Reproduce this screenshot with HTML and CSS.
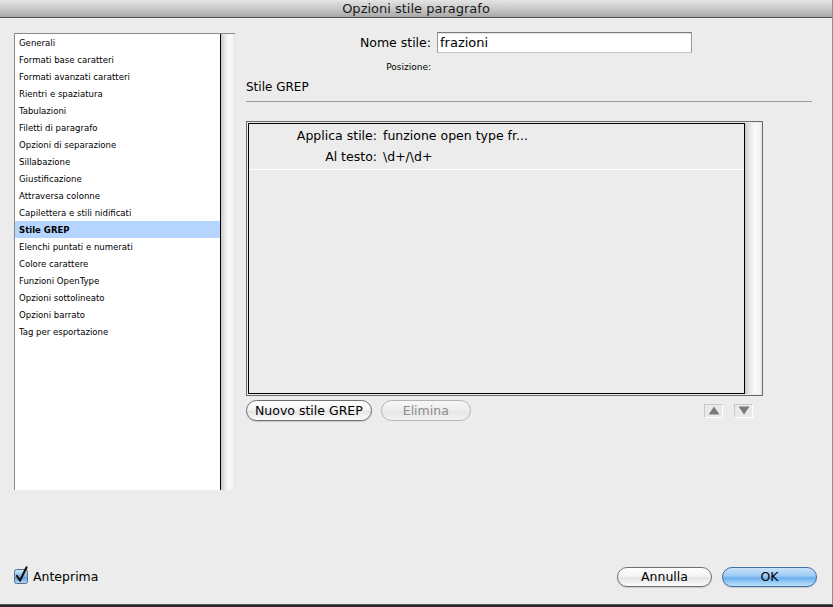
FILE: index.html
```html
<!DOCTYPE html>
<html lang="it">
<head>
<meta charset="utf-8">
<title>Opzioni stile paragrafo</title>
<link rel="stylesheet" href="styles.css">
</head>
<body>
<div class="window">
  <div class="titlebar">Opzioni stile paragrafo</div>
  <div class="content">
    <div class="sidebar">
      <ul class="cat-list">
        <li>Generali</li>
        <li>Formati base caratteri</li>
        <li>Formati avanzati caratteri</li>
        <li>Rientri e spaziatura</li>
        <li>Tabulazioni</li>
        <li>Filetti di paragrafo</li>
        <li>Opzioni di separazione</li>
        <li>Sillabazione</li>
        <li>Giustificazione</li>
        <li>Attraversa colonne</li>
        <li>Capilettera e stili nidificati</li>
        <li class="selected">Stile GREP</li>
        <li>Elenchi puntati e numerati</li>
        <li>Colore carattere</li>
        <li>Funzioni OpenType</li>
        <li>Opzioni sottolineato</li>
        <li>Opzioni barrato</li>
        <li>Tag per esportazione</li>
      </ul>
      <div class="scrolltrack"></div>
    </div>
    <div class="main">
      <div class="name-row">
        <label class="name-label">Nome stile:</label>
        <div class="text-input">frazioni</div>
      </div>
      <div class="pos-row">Posizione:</div>
      <div class="section-title">Stile GREP</div>
      <div class="rule"></div>
      <div class="grep-box">
        <div class="grep-list">
          <div class="grep-item">
            <div class="grep-row"><span class="grep-key">Applica stile:</span><span class="grep-val">funzione open type fr...</span></div>
            <div class="grep-row"><span class="grep-key">Al testo:</span><span class="grep-val">\d+/\d+</span></div>
          </div>
        </div>
        <div class="scrolltrack grep-track"></div>
      </div>
      <div class="grep-actions">
        <button class="pill">Nuovo stile GREP</button>
        <button class="pill disabled">Elimina</button>
        <div class="arrows">
          <span class="arrow-btn"><svg width="12" height="9" viewBox="0 0 12 9"><polygon points="6,0.5 11.5,8.5 0.5,8.5" fill="#7a7a7a"/></svg></span>
          <span class="arrow-btn"><svg width="12" height="9" viewBox="0 0 12 9"><polygon points="0.5,0.5 11.5,0.5 6,8.5" fill="#7a7a7a"/></svg></span>
        </div>
      </div>
    </div>
  </div>
  <div class="footer">
    <label class="preview">
      <span class="checkbox">
        <svg width="16" height="18" viewBox="0 0 16 18">
          <defs>
            <linearGradient id="cb" x1="0" y1="0" x2="0" y2="1">
              <stop offset="0" stop-color="#d6ebfc"/>
              <stop offset="0.5" stop-color="#7fb6ea"/>
              <stop offset="0.55" stop-color="#5c9fe0"/>
              <stop offset="1" stop-color="#b7dbf8"/>
            </linearGradient>
          </defs>
          <rect x="0.5" y="3.5" width="13" height="14" rx="2" fill="url(#cb)" stroke="#5a6f8c"/>
          <path d="M3 10 L6 14.5 L12.5 1.5" fill="none" stroke="#111" stroke-width="2.2" stroke-linecap="round" stroke-linejoin="round"/>
        </svg>
      </span>
      <span class="preview-text">Anteprima</span>
    </label>
    <div class="footer-buttons">
      <button class="pill big">Annulla</button>
      <button class="pill big default">OK</button>
    </div>
  </div>
</div>
</body>
</html>
```
FILE: styles.css
```css
* { box-sizing: border-box; }
html, body { margin: 0; padding: 0; }
body {
  width: 833px;
  height: 607px;
  overflow: hidden;
  background: #2a2a2a;
  font-family: "DejaVu Sans", "Liberation Sans", sans-serif;
  color: #000;
}
.window {
  width: 833px;
  height: 605px;
  background: #ececec;
  border-right: 1px solid #8e8e8e;
  border-bottom: 1px solid #555;
  display: flex;
  flex-direction: column;
}
.titlebar {
  height: 18px;
  line-height: 17px;
  text-align: center;
  font-size: 13px;
  color: #1a1a1a;
  background: linear-gradient(#e4e4e4, #c9c9c9 50%, #a8a8a8);
  border-bottom: 1px solid #4e4e4e;
}
.content {
  display: flex;
  padding: 14px 0 0 14px;
}
.sidebar {
  margin-top: 1px;
  width: 221px;
  height: 457px;
  display: flex;
  border-top: 1px solid #8a8a8a;
}
.cat-list {
  list-style: none;
  margin: 0;
  padding: 0;
  width: 207px;
  background: #fff;
  border-left: 1px solid #8a8a8a;
  border-right: 1px solid #000;
  font-family: "DejaVu Sans Condensed", "DejaVu Sans", sans-serif;
  font-stretch: condensed;
  font-size: 9.5px;
}
.cat-list li {
  height: 17px;
  line-height: 17px;
  padding-left: 4px;
  white-space: nowrap;
}
.cat-list li.selected {
  background: #b5d5ff;
  font-weight: bold;
}
.scrolltrack {
  width: 14px;
  background: linear-gradient(to right, #c8c8c8, #e6e6e6 25%, #fafafa 55%, #f4f4f4 85%, #e2e2e2);
}
.main {
  margin-left: 11px;
  width: 566px;
  display: flex;
  flex-direction: column;
}
.name-row {
  display: flex;
  align-items: center;
  height: 21px;
}
.name-label {
  width: 185px;
  text-align: right;
  font-size: 12.5px;
}
.text-input {
  margin-left: 6px;
  width: 255px;
  height: 21px;
  background: #fff;
  border: 1px solid #9a9a9a;
  border-top-color: #7a7a7a;
  border-bottom-color: #c4c4c4;
  box-shadow: inset 0 1px 1px rgba(0,0,0,0.12);
  font-size: 13px;
  line-height: 19px;
  padding-left: 2px;
}
.pos-row {
  margin-top: 9px;
  height: 10px;
  width: 185px;
  text-align: right;
  font-size: 9px;
  line-height: 10px;
}
.section-title {
  margin-top: 8px;
  height: 14px;
  line-height: 14px;
  font-size: 12px;
}
.rule {
  margin-top: 7px;
  height: 1px;
  background: #9a9a9a;
}
.grep-box {
  margin-top: 19px;
  width: 517px;
  height: 275px;
  border: 1px solid #6a6a6a;
  padding: 1px 0 1px 1px;
  display: flex;
}
.grep-list {
  flex: 1;
  border: 1px solid #000;
  background: #ececec;
}
.grep-track {
  width: 17px;
}
.grep-item {
  padding-top: 1px;
  padding-bottom: 2px;
  border-bottom: 1px solid #fff;
}
.grep-row {
  display: flex;
  height: 21px;
  align-items: center;
  font-size: 12.5px;
}
.grep-key {
  width: 128px;
  text-align: right;
}
.grep-val {
  margin-left: 6px;
}
.grep-actions {
  margin-top: 4px;
  width: 517px;
  height: 21px;
  display: flex;
  align-items: center;
  gap: 9px;
}
.pill {
  font-family: "DejaVu Sans", "Liberation Sans", sans-serif;
  font-size: 12.5px;
  color: #000;
  height: 21px;
  padding: 0 8px;
  border-radius: 11px;
  border: 1px solid #6e6e6e;
  background: linear-gradient(#ffffff, #f4f4f4 45%, #e6e6e6 55%, #fbfbfb);
  box-shadow: 0 1px 1px rgba(0,0,0,0.15);
  line-height: 19px;
}
.pill.disabled {
  width: 90px;
  color: #8c8c8c;
  border-color: #b4b4b4;
  background: linear-gradient(#f7f7f7, #ededed 50%, #e6e6e6 55%, #f3f3f3);
  box-shadow: none;
}
.arrows {
  margin-left: auto;
  margin-right: 10px;
  display: flex;
  gap: 11px;
}
.arrow-btn {
  width: 19px;
  height: 14px;
  display: flex;
  align-items: center;
  justify-content: center;
  background: #e9e9e9;
  border: 1px solid #fff;
  border-top-color: #c9c9c9;
  border-left-color: #c9c9c9;
}
.footer {
  margin-top: auto;
  margin-bottom: 17px;
  height: 21px;
  display: flex;
  align-items: center;
  padding: 0 15px 0 14px;
}
.preview {
  display: flex;
  align-items: center;
  gap: 3px;
}
.checkbox {
  display: block;
  width: 16px;
  height: 18px;
  margin-top: -4px;
}
.preview-text {
  font-size: 12.5px;
}
.footer-buttons {
  margin-left: auto;
  display: flex;
  gap: 10px;
}
.pill.big {
  width: 95px;
  height: 20px;
  font-size: 12.5px;
  line-height: 18px;
}
.pill.default {
  border-color: #3f6ea8;
  background: linear-gradient(#c9e3fa, #9ccaf3 45%, #6aaeee 55%, #bfe2fd);
}
```
